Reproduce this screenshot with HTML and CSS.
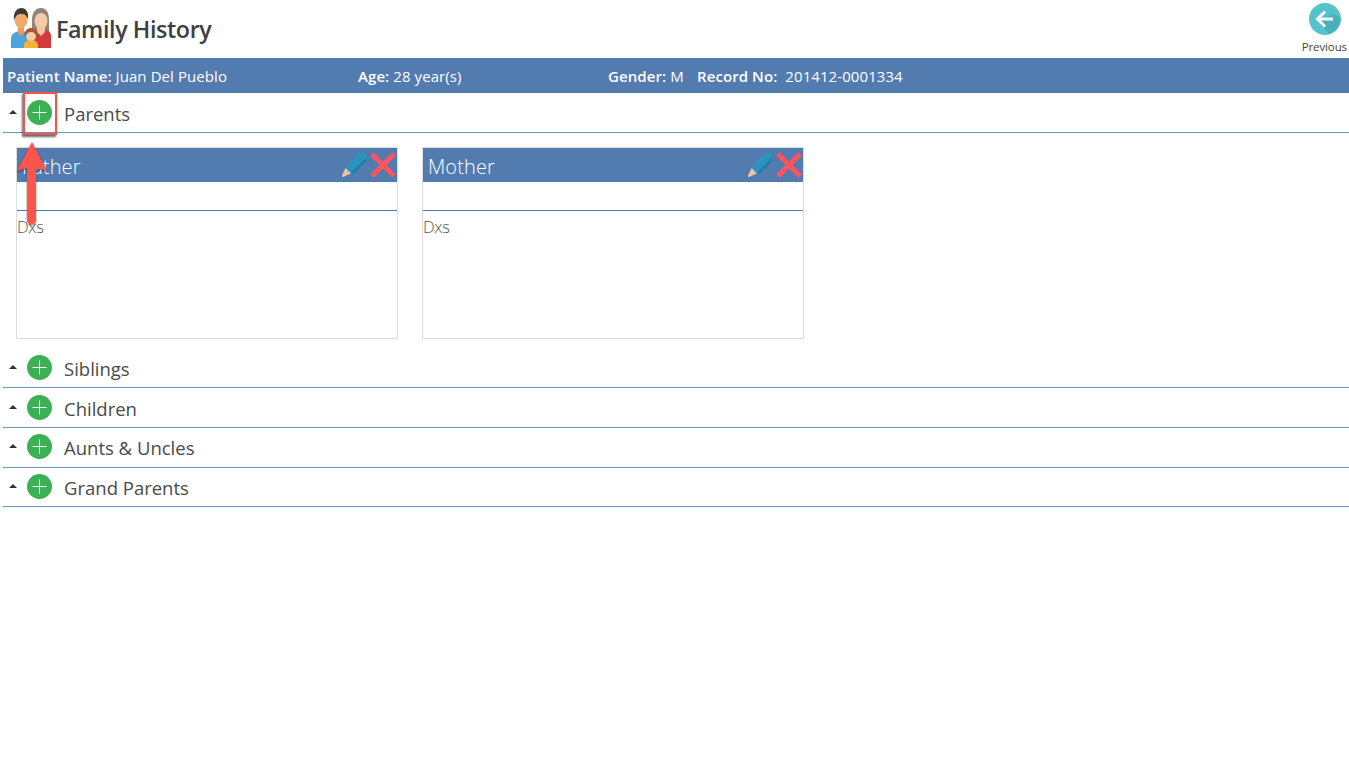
FILE: index.html
```html
<!DOCTYPE html>
<html lang="en">
<head>
<meta charset="utf-8">
<title>Family History</title>
<link rel="stylesheet" href="styles.css">
</head>
<body>
<header class="top">
  <div class="title-wrap">
    <svg class="family" viewBox="0 0 42 40" width="42" height="40">
      <path d="M21 12C21 4 25 0 30 0s8 4 8 12v16H21z" fill="#8f837c"/>
      <path d="M21 28c0-5 4-7 9-7s10 2 10 7v12H21z" fill="#d23b3b"/>
      <path d="M26 18h8v6l-4 4-4-4z" fill="#f4c49c"/>
      <ellipse cx="30" cy="13" rx="6.500" ry="8" fill="#f6cba6"/>
      <path d="M0 40V31c0-5 4-8 10-8s9 3 9 8v9z" fill="#4ea5dc"/>
      <path d="M7 18h6v7l-3 3-3-3z" fill="#e89c5e"/>
      <ellipse cx="10" cy="12" rx="6.500" ry="8" fill="#f2aa6c"/>
      <path d="M3 12C2 4 6 0 10.500 0S18 4 17 11c-2-4-3-5-7-5s-5 2-7 6z" fill="#3d3a3a"/>
      <path d="M13 40v-3c0-3 3-5 7-5s7 2 7 5v3z" fill="#f5b335"/>
      <circle cx="20" cy="28" r="5" fill="#f6cba6"/>
      <path d="M14 29c-1-6 2-9 6-9s7 3 6 9c-1-3-3-5-6-5s-5 2-6 5z" fill="#a8562c"/>
    </svg>
    <h1 class="title">Family History</h1>
  </div>
  <div class="prev">
    <svg class="prev-icon" viewBox="0 0 32 32" width="32" height="32">
      <circle cx="16" cy="16" r="16" fill="#55c3cc"/>
      <path d="M9 17l11 14 7-4 4-8-1-5-6-3z" fill="#3f9eaa" opacity=".55"/>
      <path d="M16 8.500L8.500 16l7.500 7.500M9 16h15" fill="none" stroke="#fff" stroke-width="3"/>
    </svg>
    <span class="prev-label">Previous</span>
  </div>
</header>

<div class="patient">
  <span class="cell cell-name"><b>Patient Name:</b> Juan Del Pueblo</span>
  <span class="cell cell-age"><b>Age:</b> 28 year(s)</span>
  <span class="cell cell-gender"><b>Gender:</b> M</span>
  <span class="cell"><b>Record No:</b>&nbsp; 201412-0001334</span>
</div>

<section class="group group-open">
  <div class="group-head">
    <span class="caret"></span>
    <span class="add"><svg viewBox="0 0 25 25" width="25" height="25"><circle cx="12.500" cy="12.500" r="12.500" fill="#3bb054"/><path d="M12.500 5.500v14M5.500 12.500h14" stroke="#fff" stroke-width="1"/></svg></span>
    <span class="group-name">Parents</span>
  </div>
  <div class="cards">
    <article class="card">
      <div class="card-head">
        <span class="card-title">Father</span>
        <span class="card-actions">
          <svg viewBox="0 0 26 26" width="26" height="26"><path d="M8.500 17.500L21 5" stroke="#2c93bf" stroke-width="9.500" stroke-linecap="round"/><path d="M11.500 21L24.500 8" stroke="#1f7ea8" stroke-width="2.500" stroke-linecap="round"/><path d="M4.500 16L10 21.500 2.500 24.800C1 25.200 .6 24.400 1 23.500z" fill="#f3bfa5"/></svg>
          <svg viewBox="0 0 26 26" width="26" height="26"><path d="M2 2l22 22M24 2L2 24" stroke="#fa5560" stroke-width="5"/></svg>
        </span>
      </div>
      <div class="card-sub"></div>
      <div class="card-body">Dxs</div>
    </article>
    <article class="card">
      <div class="card-head">
        <span class="card-title">Mother</span>
        <span class="card-actions">
          <svg viewBox="0 0 26 26" width="26" height="26"><path d="M8.500 17.500L21 5" stroke="#2c93bf" stroke-width="9.500" stroke-linecap="round"/><path d="M11.500 21L24.500 8" stroke="#1f7ea8" stroke-width="2.500" stroke-linecap="round"/><path d="M4.500 16L10 21.500 2.500 24.800C1 25.200 .6 24.400 1 23.500z" fill="#f3bfa5"/></svg>
          <svg viewBox="0 0 26 26" width="26" height="26"><path d="M2 2l22 22M24 2L2 24" stroke="#fa5560" stroke-width="5"/></svg>
        </span>
      </div>
      <div class="card-sub"></div>
      <div class="card-body">Dxs</div>
    </article>
  </div>
</section>

<section class="group">
  <div class="group-head">
    <span class="caret"></span>
    <span class="add"><svg viewBox="0 0 25 25" width="25" height="25"><circle cx="12.500" cy="12.500" r="12.500" fill="#3bb054"/><path d="M12.500 5.500v14M5.500 12.500h14" stroke="#fff" stroke-width="1"/></svg></span>
    <span class="group-name">Siblings</span>
  </div>
</section>
<section class="group">
  <div class="group-head">
    <span class="caret"></span>
    <span class="add"><svg viewBox="0 0 25 25" width="25" height="25"><circle cx="12.500" cy="12.500" r="12.500" fill="#3bb054"/><path d="M12.500 5.500v14M5.500 12.500h14" stroke="#fff" stroke-width="1"/></svg></span>
    <span class="group-name">Children</span>
  </div>
</section>
<section class="group">
  <div class="group-head group-head-aunts">
    <span class="caret"></span>
    <span class="add"><svg viewBox="0 0 25 25" width="25" height="25"><circle cx="12.500" cy="12.500" r="12.500" fill="#3bb054"/><path d="M12.500 5.500v14M5.500 12.500h14" stroke="#fff" stroke-width="1"/></svg></span>
    <span class="group-name">Aunts &amp; Uncles</span>
  </div>
</section>
<section class="group">
  <div class="group-head group-head-last">
    <span class="caret"></span>
    <span class="add"><svg viewBox="0 0 25 25" width="25" height="25"><circle cx="12.500" cy="12.500" r="12.500" fill="#3bb054"/><path d="M12.500 5.500v14M5.500 12.500h14" stroke="#fff" stroke-width="1"/></svg></span>
    <span class="group-name">Grand Parents</span>
  </div>
</section>

<div class="callout-box"></div>
<svg class="callout-arrow" viewBox="0 0 32 86" width="32" height="86">
  <path class="arrow-shadow" d="M16 0L31 29l-11-3V78a4.500 4.500 0 0 1-9 0V26L1 29z"/>
</svg>
</body>
</html>
```

FILE: styles.css
```css
* { box-sizing: border-box; }
html, body { margin: 0; padding: 0; }
body {
  position: relative;
  height: 784px;
  overflow: hidden;
  background: #fff;
  font-family: "Open Sans", "Noto Sans", sans-serif;
  color: #444;
}
.top {
  height: 58px;
  display: flex;
  justify-content: space-between;
  padding: 8px 2px 0 11px;
}
.title-wrap { display: flex; align-items: flex-start; }
.family { display: block; }
.title {
  margin: 3px 0 0 3px;
  font-size: 23.300px;
  line-height: 36px;
  font-weight: 600;
  letter-spacing: -.4px;
  color: #3f3f3f;
}
.prev {
  display: flex;
  flex-direction: column;
  align-items: center;
  margin-top: -5px;
}
.prev-icon { display: block; margin-left: 1px; }
.prev-label { font-size: 11.500px; line-height: 15px; margin-top: 4px; color: #444; letter-spacing: -.1px; }

.patient {
  margin-left: 3px;
  height: 35px;
  display: flex;
  align-items: center;
  padding-left: 4px;
  background: #527bb0;
  color: #fff;
  font-size: 15px;
  letter-spacing: .08px;
  white-space: nowrap;
}
.patient b { font-weight: 600; }
.cell-name { width: 351px; }
.cell-age { width: 250px; }
.cell-gender { width: 89px; }

.group { margin-left: 3px; }
.group-head {
  height: 40px;
  padding-top: 2px;
  display: flex;
  align-items: center;
  border-bottom: 1px solid #6f94c3;
}
.group-head-aunts { padding-top: 0; }
.group-head-last { height: 39px; padding-top: 1px; }
.caret {
  width: 0;
  height: 0;
  margin: 0 0 3px 6px;
  border-left: 4px solid transparent;
  border-right: 4px solid transparent;
  border-bottom: 4px solid #333;
}
.add { display: block; height: 25px; margin: -2px 0 0 10px; }
.add svg { display: block; }
.group-name {
  margin-left: 12px;
  font-size: 18.500px;
  color: #4a4a4a;
}
.cards {
  display: flex;
  gap: 24px;
  padding: 14px 0 9px 13px;
}
.card {
  width: 382px;
  height: 192px;
  border: 1px solid #dcdcdc;
}
.card-head {
  height: 34px;
  padding: 2px 1px 0 5px;
  background: #527bb0;
  display: flex;
  align-items: center;
  justify-content: space-between;
}
.card-title {
  color: #fff;
  font-size: 20px;
  font-weight: 300;
  letter-spacing: .1px;
}
.card-actions { display: flex; gap: 3px; align-items: center; margin-top: -2px; }
.card-actions svg { display: block; }
.card-sub { height: 29px; border-bottom: 1px solid #527bb0; }
.card-body {
  font-size: 16.500px;
  font-weight: 300;
  line-height: 32px;
  letter-spacing: -.3px;
  color: #555;
}

.callout-box {
  position: absolute;
  left: 23px;
  top: 92px;
  width: 34px;
  height: 43px;
  border: 2px solid #f2544c;
  box-shadow: -1px 2px 2px rgba(0,0,0,.6);
}
.callout-arrow {
  position: absolute;
  left: 16px;
  top: 142px;
}
.arrow-shadow {
  fill: #ff5449;
  filter: drop-shadow(0 1px 1px rgba(0,0,0,.45));
}
```
